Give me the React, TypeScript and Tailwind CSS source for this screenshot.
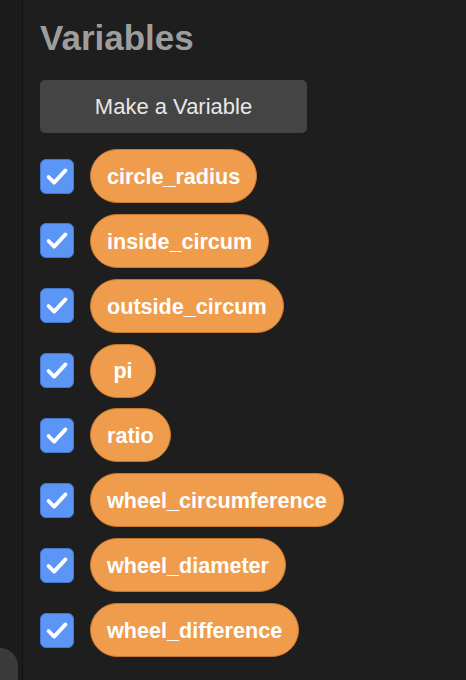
import React from "react";

const vars = [
  "circle_radius",
  "inside_circum",
  "outside_circum",
  "pi",
  "ratio",
  "wheel_circumference",
  "wheel_diameter",
  "wheel_difference",
];

function Check() {
  return (
    <div className="w-[34px] h-[35px] shrink-0 rounded-[6px] bg-[#5b96f6] border border-[#4678d0] flex items-center justify-center">
      <svg width="34" height="35" viewBox="0 0 34 35">
        <path d="M8 18 L14 24 L26 11" fill="none" stroke="#ffffff" strokeWidth="4" strokeLinecap="round" strokeLinejoin="round" />
      </svg>
    </div>
  );
}

export default function App() {
  return (
    <div
      className="w-[466px] h-[680px] bg-[#1e1e1e] flex overflow-hidden relative"
      style={{ fontFamily: '"Liberation Sans", Arial, sans-serif' }}
    >
      <div className="w-[23px] h-full bg-[#1b1b1b] border-r border-[#111111] shrink-0" />
      <div className="flex flex-col pl-[17px] pt-[20px]">
        <div className="text-[35px] leading-none font-bold text-[#9d9d9d]">Variables</div>
        <div className="mt-[25px] w-[267px] h-[53px] rounded-[5px] bg-[#444444] flex items-center justify-center text-[22px] text-[#e8e8e8]">
          Make a Variable
        </div>
        <div className="mt-[16px] flex flex-col gap-[10.86px]">
          {vars.map((v) => (
            <div key={v} className="flex items-center gap-[16px]">
              <Check />
              <div className="h-[54px] min-w-[66px] px-[16px] pt-[2px] rounded-full bg-[#f09c4d] border border-[#c8782f] flex items-center justify-center text-[21.6px] font-bold text-white">
                {v}
              </div>
            </div>
          ))}
        </div>
      </div>
      <div className="absolute left-0 bottom-0 w-[18px] h-[32px] rounded-tr-[18px] bg-[#3a3a3a]" />
    </div>
  );
}
